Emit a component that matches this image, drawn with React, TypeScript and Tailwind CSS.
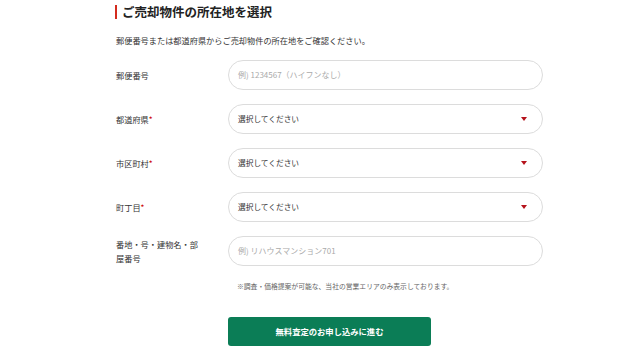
import { ReactNode } from "react";

const font = { fontFamily: '"Noto Sans CJK JP", "Noto Sans", sans-serif' };

function Row({ label, required, children }: { label: string; required?: boolean; children: ReactNode }) {
  return (
    <div className="flex items-center">
      <div className="w-[112px] pr-[26px] text-[8.2px] leading-[14px] text-[#333]">
        {label}
        {required && <span className="text-[#c00]">*</span>}
      </div>
      {children}
    </div>
  );
}

function TextBox({ placeholder }: { placeholder: string }) {
  return (
    <div className="flex h-[30px] w-[315px] items-center rounded-full border border-[#dcdcdc] bg-white pl-[9px] text-[8px] text-[#aaa]">
      {placeholder}
    </div>
  );
}

function SelectBox() {
  return (
    <div className="flex h-[30px] w-[315px] items-center justify-between rounded-full border border-[#dcdcdc] bg-white pl-[9px] pr-[15px] text-[7.7px] text-[#333]">
      <span>選択してください</span>
      <svg width="6" height="4" viewBox="0 0 6 4">
        <path d="M0 0H6L3 4Z" fill="#b5121b" />
      </svg>
    </div>
  );
}

export default function App() {
  return (
    <div className="h-[352px] w-[640px] overflow-hidden bg-white pl-[115px] pt-[4px]" style={font}>
      <div className="flex items-center gap-[5px]">
        <div className="h-[14px] w-[2px] bg-[#d42b1e]" />
        <h1 className="text-[12.5px] font-bold leading-[15px] text-[#222]">ご売却物件の所在地を選択</h1>
      </div>
      <p className="mt-[15px] pl-[1px] text-[8.2px] leading-[12px] text-[#333]">
        郵便番号または都道府県からご売却物件の所在地をご確認ください。
      </p>
      <div className="mt-[14px] flex flex-col gap-[14px] pl-[1px]">
        <Row label="郵便番号">
          <TextBox placeholder="例) 1234567（ハイフンなし）" />
        </Row>
        <Row label="都道府県" required>
          <SelectBox />
        </Row>
        <Row label="市区町村" required>
          <SelectBox />
        </Row>
        <Row label="町丁目" required>
          <SelectBox />
        </Row>
        <Row label="番地・号・建物名・部屋番号">
          <TextBox placeholder="例) リハウスマンション701" />
        </Row>
      </div>
      <p className="ml-[122px] mt-[14px] text-[6.8px] leading-[12px] text-[#666]">
        ※調査・価格提案が可能な、当社の営業エリアのみ表示しております。
      </p>
      <button className="ml-[113px] mt-[25px] flex h-[29px] w-[203px] items-center justify-center rounded-[3px] bg-[#0b7d56] text-[8.3px] font-bold text-white">
        無料査定のお申し込みに進む
      </button>
    </div>
  );
}
